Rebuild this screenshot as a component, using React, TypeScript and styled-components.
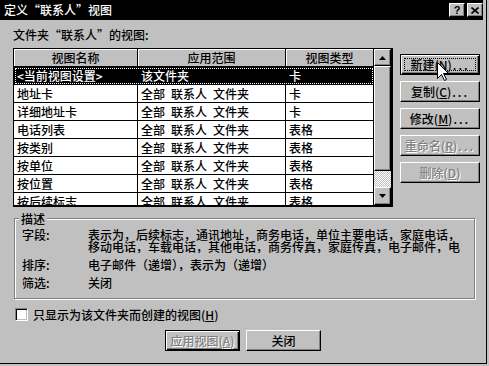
import React from "react";
import styled, { createGlobalStyle, css } from "styled-components";

const FONT = `"Noto Sans CJK SC", "Noto Sans CJK JP", "DejaVu Sans", sans-serif`;
const GRAY = "#c0c0c0";

const GlobalStyle = createGlobalStyle`
  * { box-sizing: border-box; }
  html, body { margin: 0; padding: 0; background: ${GRAY}; }
  body {
    width: 489px; height: 366px; overflow: hidden;
    font-family: ${FONT}; font-size: 12px; font-weight: 500; color: #000;
  }
`;

const raised = css`
  background: ${GRAY};
  border: 1px solid;
  border-color: #fff #000 #000 #fff;
  box-shadow: inset -1px -1px 0 #808080;
`;

const Window = styled.div`
  position: relative;
  width: 487px;
  height: 364px;
  background: ${GRAY};
  border-right: 1px solid #000;
  border-bottom: 1px solid #000;
  display: flex;
  flex-direction: column;
`;

const TitleBar = styled.div`
  height: 20px;
  margin-right: 3px;
  background: #000;
  color: #fff;
  display: flex;
  align-items: center;
  padding-left: 4px;
  line-height: 14px;
  font-size: 12px;
`;

const TitleText = styled.span`
  flex: 1;
`;

const TitleButton = styled.div`
  ${raised};
  width: 16px;
  height: 14px;
  display: flex;
  align-items: center;
  justify-content: center;
  color: #000;
  font: bold 11px "Liberation Sans", sans-serif;
  & + & { margin-left: 2px; }
`;

const Body = styled.div`
  display: flex;
  flex-direction: column;
  padding-left: 13px;
`;

const Caption = styled.div`
  margin-top: 8px;
  height: 14px;
  line-height: 14px;
`;

const MainRow = styled.div`
  display: flex;
  margin-top: 6px;
`;

const ListView = styled.div`
  width: 380px;
  height: 159px;
  border: 1px solid #000;
  border-right-width: 2px;
  border-bottom-width: 2px;
  display: flex;
  overflow: hidden;
  flex-shrink: 0;
`;

const Table = styled.div`
  width: 360px;
  display: flex;
  flex-direction: column;
  background: #fff;
  overflow: hidden;
`;

const Row = styled.div<{ $selected?: boolean }>`
  display: grid;
  grid-template-columns: 124px 148px 88px;
  height: 18px;
  flex-shrink: 0;
  line-height: 17px;
  ${(p) =>
    p.$selected &&
    css`
      background: #000;
      color: #fff;
      outline: 1px dotted #fff;
      outline-offset: -2px;
    `}
`;

const Cell = styled.div<{ $header?: boolean }>`
  border-right: 1px solid #000;
  border-bottom: 1px solid #000;
  padding-left: 3px;
  white-space: nowrap;
  overflow: hidden;
  ${(p) =>
    p.$header &&
    css`
      background: ${GRAY};
      text-align: center;
      padding-left: 0;
      box-shadow: inset 1px 1px 0 #fff;
    `}
`;

const ScrollBar = styled.div`
  width: 17px;
  display: flex;
  flex-direction: column;
  background: ${GRAY};
`;

const ScrollButton = styled.div<{ $h: number }>`
  ${raised};
  height: ${(p) => p.$h}px;
  display: flex;
  align-items: center;
  justify-content: center;
`;

const Thumb = styled.div<{ $h: number }>`
  ${raised};
  height: ${(p) => p.$h}px;
`;

const Track = styled.div`
  flex: 1;
  background: repeating-conic-gradient(#fff 0 25%, ${GRAY} 0 50%) 0 0 / 2px 2px;
`;

const ButtonColumn = styled.div`
  display: flex;
  flex-direction: column;
  gap: 6px;
  margin-left: 7px;
  padding-top: 6px;
`;

const Button = styled.div<{ $default?: boolean; $disabled?: boolean; $w?: number; $focus?: boolean }>`
  position: relative;
  width: ${(p) => p.$w ?? 80}px;
  height: 21px;
  flex-shrink: 0;
  display: flex;
  align-items: center;
  justify-content: center;
  line-height: 14px;
  white-space: nowrap;
  background: ${GRAY};
  border: 1px solid;
  border-color: #fff #000 #000 #fff;
  box-shadow: inset -1px -1px 0 #808080;
  ${(p) =>
    p.$default &&
    css`
      border: 1px solid #000;
      box-shadow: inset 1px 1px 0 #fff, inset -1px -1px 0 #000, inset -2px -2px 0 #808080;
    `}
  ${(p) =>
    p.$disabled &&
    css`
      color: #808080;
      text-shadow: 1px 1px 0 #fff;
    `}
  ${(p) =>
    p.$focus &&
    css`
      outline: 1px dotted #000;
      outline-offset: -5px;
    `}
`;

const Dots = styled.span`
  letter-spacing: 2px;
  margin-left: 1px;
`;

const GroupBox = styled.div`
  width: 461px;
  margin: 11px 0 0 1px;
  border: 1px solid #808080;
  box-shadow: 1px 1px 0 #fff, inset 1px 1px 0 #fff;
  padding: 0 0 9px 7px;
  display: flex;
  flex-direction: column;
`;

const GroupLegend = styled.div`
  align-self: flex-start;
  margin: -7px 0 0 -3px;
  padding: 0 2px;
  background: ${GRAY};
  line-height: 14px;
`;

const DescRow = styled.div<{ $gap: number }>`
  display: grid;
  grid-template-columns: 66px 372px;
  align-items: start;
  margin-top: ${(p) => p.$gap}px;
`;

const DescLine = styled.div`
  height: 12px;
  line-height: 12px;
  overflow: hidden;
  white-space: nowrap;
`;

const DescValue = styled.div`
  display: flex;
  flex-direction: column;
`;

const CheckRow = styled.div`
  display: flex;
  align-items: center;
  margin: 9px 0 0 2px;
  line-height: 13px;
`;

const CheckBox = styled.div`
  width: 13px;
  height: 13px;
  background: #fff;
  border: 1px solid;
  border-color: #808080 #fff #fff #808080;
  box-shadow: inset 1px 1px 0 #000, inset -1px -1px 0 ${GRAY};
  margin-right: 5px;
`;

const ButtonBar = styled.div`
  display: flex;
  justify-content: center;
  gap: 6px;
  margin-top: 9px;
`;

const Cursor = styled.svg`
  position: absolute;
  left: 437px;
  top: 62px;
`;

const Arrow = ({ up }: { up?: boolean }) => (
  <svg width="7" height="4" viewBox="0 0 7 4">
    <polygon points={up ? "3.5,0 7,4 0,4" : "0,0 7,0 3.5,4"} fill="#000" />
  </svg>
);

const ALL = "全部\u2002联系人\u2002文件夹";
const rows: [string, string, string][] = [
  ["<当前视图设置>", "该文件夹", "卡"],
  ["地址卡", ALL, "卡"],
  ["详细地址卡", ALL, "卡"],
  ["电话列表", ALL, "表格"],
  ["按类别", ALL, "表格"],
  ["按单位", ALL, "表格"],
  ["按位置", ALL, "表格"],
  ["按后续标志", ALL, "表格"],
];

export default function App() {
  return (
    <>
      <GlobalStyle />
      <Window>
        <TitleBar>
          <TitleText>定义“联系人”视图</TitleText>
          <TitleButton>?</TitleButton>
          <TitleButton>
            <svg width="8" height="7" viewBox="0 0 8 7">
              <path d="M0.5 0.5 L7.5 6.5 M7.5 0.5 L0.5 6.5" stroke="#000" strokeWidth="1.6" />
            </svg>
          </TitleButton>
        </TitleBar>
        <Body>
          <Caption>文件夹“联系人”的视图:</Caption>
          <MainRow>
            <ListView>
              <Table>
                <Row>
                  <Cell $header>视图名称</Cell>
                  <Cell $header>应用范围</Cell>
                  <Cell $header>视图类型</Cell>
                </Row>
                {rows.map((r, i) => (
                  <Row key={i} $selected={i === 0}>
                    {r.map((c, j) => (
                      <Cell key={j}>{c}</Cell>
                    ))}
                  </Row>
                ))}
              </Table>
              <ScrollBar>
                <ScrollButton $h={17}>
                  <Arrow up />
                </ScrollButton>
                <Thumb $h={105} />
                <Track />
                <ScrollButton $h={18}>
                  <Arrow />
                </ScrollButton>
              </ScrollBar>
            </ListView>
            <ButtonColumn>
              <Button $default $focus>
                新建(<u>N</u>)<Dots>...</Dots>
              </Button>
              <Button>
                复制(<u>C</u>)<Dots>...</Dots>
              </Button>
              <Button>
                修改(<u>M</u>)<Dots>...</Dots>
              </Button>
              <Button $disabled>
                重命名(<u>R</u>)<Dots>...</Dots>
              </Button>
              <Button $disabled>
                删除(<u>D</u>)
              </Button>
            </ButtonColumn>
          </MainRow>
          <GroupBox>
            <GroupLegend>描述</GroupLegend>
            <DescRow $gap={3}>
              <DescLine>字段:</DescLine>
              <DescValue>
                <DescLine>表示为，后续标志，通讯地址，商务电话，单位主要电话，家庭电话，</DescLine>
                <DescLine>移动电话，车载电话，其他电话，商务传真，家庭传真，电子邮件，电话</DescLine>
              </DescValue>
            </DescRow>
            <DescRow $gap={6}>
              <DescLine>排序:</DescLine>
              <DescLine>电子邮件（递增），表示为（递增）</DescLine>
            </DescRow>
            <DescRow $gap={6}>
              <DescLine>筛选:</DescLine>
              <DescLine>关闭</DescLine>
            </DescRow>
          </GroupBox>
          <CheckRow>
            <CheckBox />
            只显示为该文件夹而创建的视图(<u>H</u>)
          </CheckRow>
        </Body>
        <ButtonBar>
          <Button $default $disabled $w={75}>
            应用视图(<u>A</u>)
          </Button>
          <Button $w={75}>关闭</Button>
        </ButtonBar>
        <Cursor width="13" height="20" viewBox="0 0 13 20">
          <path
            d="M0.5 0.5 L0.5 16.5 L4.5 12.5 L7.5 18.5 L9.5 17.5 L6.5 11.5 L11.5 11.5 Z"
            fill="#fff"
            stroke="#000"
            strokeWidth="1"
          />
        </Cursor>
      </Window>
    </>
  );
}
